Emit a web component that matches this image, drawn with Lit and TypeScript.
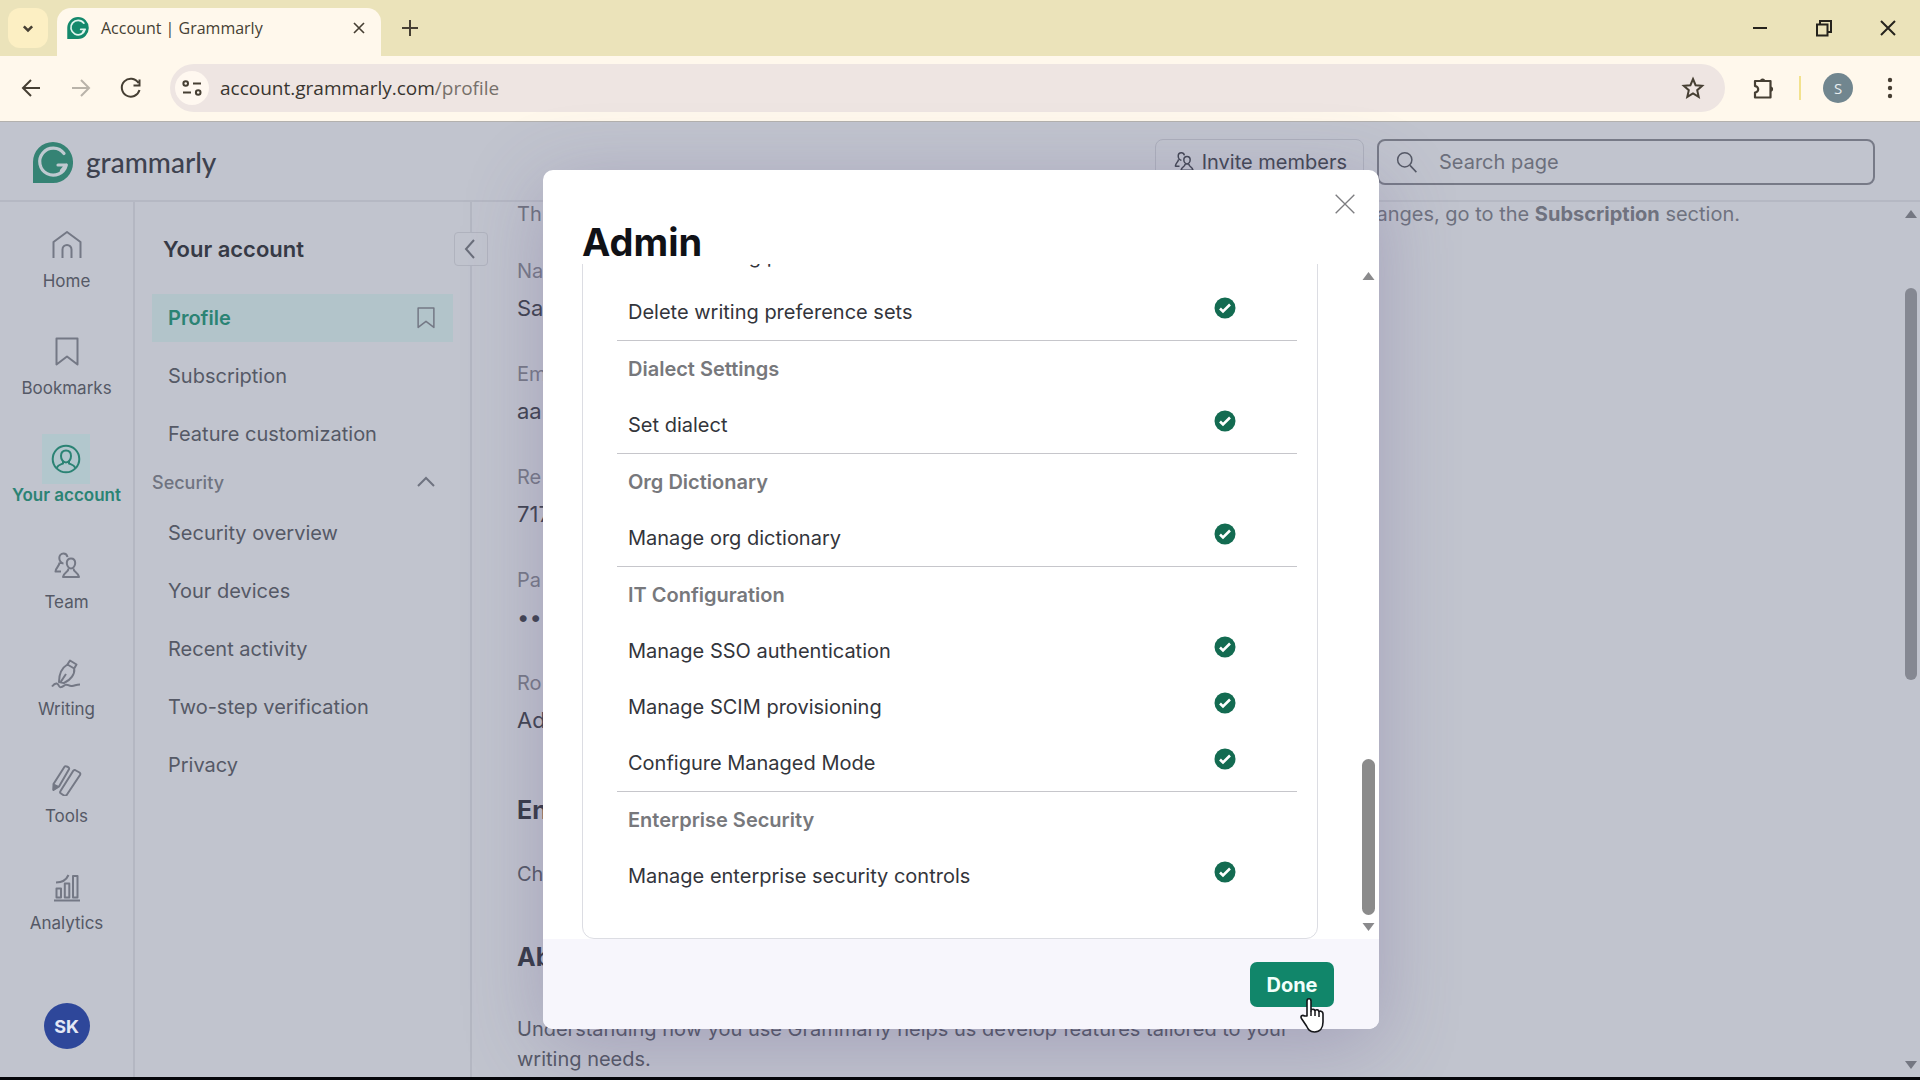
import { LitElement, html, css, svg, nothing } from "lit";
import { customElement, state } from "lit/decorators.js";
import { classMap } from "lit/directives/class-map.js";

const leaf = (cls: string, fill: string, line: string) => html`
  <svg class=${cls} viewBox="0 0 40 41" aria-hidden="true">
    <path d="M20 0A20 20 0 0 1 40 20.500A20 20 0 0 1 20 41H0V20A20 20 0 0 1 20 0Z" fill=${fill} />
    <path d="M31 11.500A13.500 13.500 0 1 0 33.300 23H25M33.300 23L28.500 28.500" fill="none" stroke=${line} stroke-width="3.200" stroke-linecap="round" stroke-linejoin="round" />
  </svg>`;

const shapes = {
  home: svg`<path d="M2.500 29V13L16 3l13.500 10v16M11.500 29V20.500a4.500 4.500 0 0 1 9 0V29"/>`,
  bookmark: svg`<path d="M5.500 2.500h21v26L16 20.500 5.500 28.500z"/>`,
  account: svg`<circle cx="16" cy="16" r="13.300"/><path d="M16 7.500c-3.300 0-5 2.300-5 5.500s2 6.500 5 6.500 5-3.300 5-6.500-1.700-5.500-5-5.500zM6.500 25c1.500-3 4-3.500 6.500-4.500v-2M25.500 25c-1.500-3-4-3.500-6.500-4.500v-2"/>`,
  team: svg`<path d="M12.500 3.500c-2.600 0-4.200 2-4.200 4.500s1.700 5.500 4.200 5.500M12.500 3.500c2.300 0 3.600 1.600 4 3.600M8.500 12.500C8.500 16 5 17 4.500 21.500h5.500"/><path d="M20 8.500c-2.700 0-4.200 2-4.200 4.600s1.800 5.400 4.200 5.400 4.200-2.800 4.200-5.400-1.500-4.600-4.200-4.600zM17.500 18.500c0 4-4.500 3.500-5.500 8.500h16c-1-5-5.500-4.500-5.500-8.500"/>`,
  writing: svg`<path d="M20 3.500l6.500 4-2.300 4-6.800-4zM17.400 7.500l6.800 4c.8 5.500-3.200 11.500-10.200 14.500l-5-1c0-8 2.500-14 8.400-17.500zM11 24.500l5-7.500M2 29.500c4-5 6-3 7-.500s3.500.500 6-1 3.500 1.500 7 1 4-1.500 8-1.500"/>`,
  tools: svg`<path d="M2.500 20L13.500 2.800c1-1.500 5.500.500 4.500 2.500L8 22.500 2.500 26zM3 21l4.500 2M9.500 27L21.500 8c1-1.500 1-2.500 2.500-2l4.500 2.500c1 .7 1.200 1.200.5 2.500L16 30.500c-.8 1.500-2 1.500-3 1l-3-2c-1-.700-1.200-1.500-.500-2.500z"/><path d="M3 21l3.500 2-4 2.500z" fill="currentColor"/>`,
  analytics: svg`<path d="M3 29.500h26M5.500 17.500h4.500v9H5.500zM13.800 12.500h4.500v14h-4.500zM22 5h4.500v21.500H22zM5 11.500c6 0 10.500-3 12.500-7.500"/>`,
  search: svg`<circle cx="13" cy="13" r="9.500"/><path d="M20 20.500l8.500 9"/>`,
};

type Shape = keyof typeof shapes;

const icon = (name: Shape, cls = "icon") => html`
  <svg class=${cls} viewBox="0 0 32 32" fill="none" stroke="currentColor" stroke-width="2" stroke-linejoin="round" aria-hidden="true">${shapes[name]}</svg>`;

const line = (d: string, cls = "glyph", width = 2) => html`
  <svg class=${cls} viewBox="0 0 24 24" fill="none" stroke="currentColor" stroke-width=${width} aria-hidden="true"><path d=${d} /></svg>`;

@customElement("browser-chrome")
class BrowserChrome extends LitElement {
  static styles = css`
    :host { display: block; font-family: "Open Sans", "Noto Sans", sans-serif; color: #463f33; }
    button { border: 0; padding: 0; margin: 0; background: none; color: inherit; font: inherit; display: grid; place-items: center; }
    .strip { height: 56px; box-sizing: border-box; padding: 8px 0 0 8px; background: #ebe3ba; display: flex; align-items: flex-start; }
    .tabs { width: 40px; height: 40px; border-radius: 12px; background: #fcefc3; margin-right: 9px; }
    .tab { width: 324px; height: 48px; box-sizing: border-box; padding: 0 12px 8px 10px; border-radius: 14px 14px 0 0; background: #fff8ec; display: flex; align-items: center; gap: 12px; font-size: 16px; }
    .tab .title { flex: 1; white-space: nowrap; }
    .favicon { width: 22px; height: 22px; }
    .mini { width: 20px; height: 20px; }
    .glyph { width: 24px; height: 24px; }
    .new { width: 40px; height: 40px; margin-left: 9px; }
    .window { margin-left: auto; display: flex; color: #25231d; }
    .window button { width: 64px; height: 40px; }
    .bar { height: 66px; box-sizing: border-box; padding: 8px 18px 9px 12px; background: #fff8ec; border-bottom: 1px solid #b3b1ae; display: flex; align-items: center; }
    .nav { display: flex; gap: 12px; margin-right: 20px; }
    .nav button { width: 38px; height: 40px; }
    .off { color: #b9b3a9; }
    .address { flex: 1; height: 48px; box-sizing: border-box; padding: 0 20px 0 5px; border-radius: 24px; background: #eee5e2; display: flex; align-items: center; gap: 11px; }
    .site { width: 34px; height: 34px; border-radius: 17px; background: #fff8f0; }
    .address a { flex: 1; color: #39352f; text-decoration: none; font-size: 19px; }
    .address a span { color: #77706a; }
    .tools { display: flex; align-items: center; margin-left: 26px; }
    .rule { width: 2px; height: 24px; background: #f3e28d; margin: 0 22px 0 24px; }
    .me { width: 30px; height: 30px; border-radius: 15px; background: #71868f; color: #e9eef0; font-size: 15px; margin-right: 25px; }
  `;

  render() {
    return html`
      <div class="strip">
        <button class="tabs" aria-label="Search tabs">${line("M7 10l5 5 5-5", "mini", 3)}</button>
        <div class="tab">
          ${leaf("favicon", "#14896c", "#dff5ee")}
          <span class="title">Account | Grammarly</span>
          <button aria-label="Close tab">${line("M6 6l12 12M18 6L6 18", "mini")}</button>
        </div>
        <button class="new" aria-label="New tab">${line("M12 4v16M4 12h16")}</button>
        <div class="window">
          <button aria-label="Minimize">${line("M5 12h14")}</button>
          <button aria-label="Restore">${line("M5 8.500h10.500v11H5zM8 8V5h11v11h-3")}</button>
          <button aria-label="Close">${line("M5 5l14 14M19 5L5 19")}</button>
        </div>
      </div>
      <div class="bar">
        <div class="nav">
          <button aria-label="Back">${line("M21 12H4M12 4l-8 8 8 8")}</button>
          <button class="off" aria-label="Forward">${line("M3 12h17M12 4l8 8-8 8")}</button>
          <button aria-label="Reload">${line("M19.500 7A9 9 0 1 0 20.500 14M20.500 3.500V9.500H14.500")}</button>
        </div>
        <div class="address">
          <button class="site" aria-label="Site information">${line("M13 7.500h8M3 16.500h8M8 7.500a2.300 2.300 0 1 0-4.600 0a2.300 2.300 0 1 0 4.600 0M20.500 16.500a2.300 2.300 0 1 0-4.600 0a2.300 2.300 0 1 0 4.600 0")}</button>
          <a href="#profile">account.grammarly.com<span>/profile</span></a>
          <button aria-label="Bookmark this tab">${line("M12 3l2.600 6.200 6.600.600-5 4.400 1.500 6.600L12 17.300l-5.700 3.500 1.500-6.600-5-4.400 6.600-.600z")}</button>
        </div>
        <div class="tools">
          <button aria-label="Extensions">
            <svg class="glyph" viewBox="0 0 24 24" fill="none" stroke="currentColor" stroke-width="2.200" stroke-linejoin="round"><path d="M4 5H19.500V21.500H4V16.500a3.200 3.200 0 0 0 0-6.400z" /><path d="M9 5a2.600 2.600 0 0 1 5.200 0zM19.500 10.500a2.600 2.600 0 0 1 0 5.200z" fill="currentColor" stroke="none" /></svg>
          </button>
          <span class="rule"></span>
          <button class="me" aria-label="Profile S">S</button>
          <button aria-label="Menu">
            <svg class="glyph" viewBox="0 0 24 24" fill="currentColor"><circle cx="12" cy="4" r="2.200"/><circle cx="12" cy="12" r="2.200"/><circle cx="12" cy="20" r="2.200"/></svg>
          </button>
        </div>
      </div>`;
  }
}

const rail: { label: string; shape: Shape }[] = [
  { label: "Home", shape: "home" },
  { label: "Bookmarks", shape: "bookmark" },
  { label: "Your account", shape: "account" },
  { label: "Team", shape: "team" },
  { label: "Writing", shape: "writing" },
  { label: "Tools", shape: "tools" },
  { label: "Analytics", shape: "analytics" },
];

const fields = [
  ["Na", "Sa"],
  ["Em", "aa"],
  ["Re", "717"],
  ["Pa", "••"],
  ["Ro", "Ad"],
];

@customElement("account-page")
class AccountPage extends LitElement {
  static styles = css`
    :host { display: flex; flex-direction: column; min-height: 0; background: #c1c4ce; color: #555966; font-family: Inter, "Liberation Sans", sans-serif; font-size: 20px; }
    button { padding: 0; margin: 0; background: none; color: inherit; font: inherit; }
    a { color: inherit; text-decoration: none; }
    h2, h3, p, dl, dd { margin: 0; }
    .icon { width: 32px; height: 32px; }
    .small { width: 24px; height: 24px; }
    header { height: 80px; flex: none; box-sizing: border-box; padding: 2px 45px 0 33px; border-bottom: 2px solid #b5b8c3; display: flex; align-items: center; gap: 13px; }
    .brand { display: flex; align-items: center; gap: 13px; margin-right: auto; color: #3e424f; font-family: Lato, sans-serif; font-size: 28px; font-weight: 500; }
    .logo { width: 40px; height: 41px; }
    .invite { height: 46px; padding: 0 16px; border: 1px solid #adb0bc; border-radius: 8px; display: flex; align-items: center; gap: 6px; color: #434754; }
    .search { width: 498px; height: 46px; box-sizing: border-box; padding: 0 16px; border: 2px solid #777a87; border-radius: 8px; display: flex; align-items: center; gap: 20px; }
    .search input { flex: 1; min-width: 0; border: 0; padding: 0; outline: 0; background: none; font: inherit; color: inherit; }
    .search input::placeholder { color: #6c6f7c; opacity: 1; }
    .body { flex: 1; min-height: 0; display: flex; }
    .rail { width: 135px; box-sizing: border-box; padding: 18px 0 28px; border-right: 2px solid #b4b7c2; display: flex; flex-direction: column; align-items: center; font-size: 16px; font-weight: 500; }
    .rail a { height: 107px; display: flex; flex-direction: column; align-items: center; line-height: 22px; white-space: nowrap; font-size: 17px; font-weight: 400; }
    .tile { width: 48px; height: 50px; display: grid; place-items: center; color: #747885; }
    .rail a.on { color: #2b8374; font-weight: 600; }
    .on .tile { background: #b2c7cd; color: #2b8374; }
    .avatar { margin-top: auto; width: 46px; height: 46px; border: 0; border-radius: 23px; background: #2e479a; color: #e3e7f5; font-size: 18px; font-weight: 700; }
    .panel { width: 337px; box-sizing: border-box; padding: 30px 17px 0; border-right: 2px solid #b4b7c2; }
    .head { display: flex; align-items: center; justify-content: space-between; height: 34px; padding-left: 11px; margin: 0 -35px 28px 0; color: #363a46; }
    .head h2 { font-size: 22px; font-weight: 600; }
    .fold { width: 34px; height: 34px; border: 1px solid #b0b3be; border-radius: 4px; background: #c1c4ce; color: #6a6e7a; display: grid; place-items: center; }
    .list { display: flex; flex-direction: column; gap: 10px; }
    .list a { height: 48px; padding: 0 15px 0 16px; display: flex; align-items: center; justify-content: space-between; }
    .list a.on { background: #b2c4ca; color: #2b8374; font-weight: 600; }
    .list a.on svg { color: #747885; }
    .group { width: 100%; height: 24px; margin: 12px 0 15px; padding-right: 15px; border: 0; display: flex; align-items: center; justify-content: space-between; font-size: 18px; font-weight: 500; color: #6f7380; }
    .main { flex: 1; min-width: 0; overflow: hidden; padding: 0 162px 0 45px; line-height: 30px; }
    .note { display: flex; justify-content: space-between; color: #6f727f; line-height: 24px; margin-bottom: 27px; }
    .field { height: 103px; }
    .field dt { height: 36px; line-height: 36px; color: #777a87; }
    .field dd { line-height: 38px; font-size: 22px; color: #3f434f; }
    .main h3 { font-size: 25px; font-weight: 700; color: #363a46; line-height: 36px; }
    .first { margin: 24px 0 31px; }
    .next { margin: 50px 0 39px; }
    .wide { width: 780px; }
    .track { width: 18px; flex: none; padding: 8px 0; box-sizing: border-box; display: flex; flex-direction: column; align-items: center; color: #747782; }
    .track svg { width: 12px; height: 8px; }
    .thumb { width: 12px; height: 392px; border-radius: 6px; background: #858892; margin: 70px 0 auto; }
  `;

  render() {
    return html`
      <header>
        <a class="brand" href="#home">${leaf("logo", "#358374", "#bfc9d0")}<span>grammarly</span></a>
        <button class="invite">${icon("team", "small")}Invite members</button>
        <label class="search">${icon("search", "small")}<input type="search" aria-label="Search page" placeholder="Search page" /></label>
      </header>
      <div class="body">
        <nav class="rail">
          ${rail.map(
            (item) => html`<a href="#${item.shape}" class=${classMap({ on: item.shape === "account" })}><span class="tile">${icon(item.shape)}</span>${item.label}</a>`,
          )}
          <button class="avatar">SK</button>
        </nav>
        <nav class="panel">
          <div class="head">
            <h2>Your account</h2>
            <button class="fold" aria-label="Collapse panel">${line("M15 3l-8 9 8 9", "small")}</button>
          </div>
          <div class="list">
            <a class="on" href="#profile">Profile ${icon("bookmark", "small")}</a>
            <a href="#subscription">Subscription</a>
            <a href="#features">Feature customization</a>
          </div>
          <button class="group">Security ${line("M4 16l8-8 8 8", "small")}</button>
          <div class="list">
            ${["Security overview", "Your devices", "Recent activity", "Two-step verification", "Privacy"].map(
              (label) => html`<a href="#security">${label}</a>`,
            )}
          </div>
        </nav>
        <main class="main">
          <p class="note"><span>Th</span><span>anges, go to the <b>Subscription</b> section.</span></p>
          <dl>
            ${fields.map(([label, value]) => html`<div class="field"><dt>${label}</dt><dd>${value}</dd></div>`)}
          </dl>
          <h3 class="first">En</h3>
          <p>Ch</p>
          <h3 class="next">Ab</h3>
          <p class="wide">Understanding how you use Grammarly helps us develop features tailored to your writing needs.</p>
        </main>
        <div class="track">
          <svg viewBox="0 0 12 8"><path d="M6 0l6 8H0z" fill="currentColor" /></svg>
          <div class="thumb"></div>
          <svg viewBox="0 0 12 8"><path d="M6 8L0 0h12z" fill="currentColor" /></svg>
        </div>
      </div>`;
  }
}

const sections = [
  { title: "", rows: ["Create writing preference sets", "Delete writing preference sets"] },
  { title: "Dialect Settings", rows: ["Set dialect"] },
  { title: "Org Dictionary", rows: ["Manage org dictionary"] },
  { title: "IT Configuration", rows: ["Manage SSO authentication", "Manage SCIM provisioning", "Configure Managed Mode"] },
  { title: "Enterprise Security", rows: ["Manage enterprise security controls"] },
];

@customElement("role-dialog")
class RoleDialog extends LitElement {
  static styles = css`
    :host { display: flex; flex-direction: column; box-sizing: border-box; border-radius: 10px; background: #fff; box-shadow: 0 16px 80px rgba(96, 80, 140, 0.3); font-family: Inter, "Liberation Sans", sans-serif; font-size: 20px; color: #33353b; overflow: hidden; }
    button { border: 0; padding: 0; margin: 0; background: none; color: inherit; font: inherit; }
    .top { height: 94px; flex: none; box-sizing: border-box; padding: 18px 18px 0 39px; display: flex; justify-content: space-between; align-items: flex-start; }
    h1 { margin: 29px 0 0; font-size: 38px; line-height: 50px; font-weight: 700; color: #101116; }
    .close { width: 32px; height: 32px; color: #7d7d80; }
    .close svg { width: 32px; height: 32px; display: block; }
    .scroll { flex: 1; min-height: 0; display: flex; }
    .view { flex: 1; min-width: 0; margin-left: 39px; overflow: hidden; display: flex; flex-direction: column; justify-content: flex-end; }
    .card { border: 1px solid #dcdde3; border-radius: 12px; padding: 0 20px 34px 34px; }
    table { width: 100%; border-collapse: separate; border-spacing: 0; table-layout: fixed; }
    th, td { height: 56px; padding: 0 11px; box-sizing: border-box; text-align: left; vertical-align: middle; font-weight: 400; line-height: 28px; }
    .section > * { height: 57px; border-top: 1px solid #c6c6cb; }
    .title { font-weight: 600; color: #77787c; }
    .mark { width: 145px; padding: 0 0 12px; text-align: center; }
    .mark svg { width: 22px; height: 22px; vertical-align: middle; }
    .track { width: 22px; flex: none; margin-left: 39px; padding: 8px 0; box-sizing: border-box; display: flex; flex-direction: column; align-items: center; color: #8a8a8c; }
    .track svg { width: 13px; height: 8px; }
    .thumb { width: 13px; height: 156px; border-radius: 7px; background: #8b8b8b; margin: auto 0 8px; }
    footer { height: 90px; flex: none; box-sizing: border-box; padding: 23px 45px; background: #f7f6fc; display: flex; justify-content: flex-end; align-items: flex-start; }
    .done { width: 84px; height: 45px; border-radius: 7px; background: #11866a; color: #f2fffb; font-weight: 700; }
  `;

  render() {
    return html`
      <div class="top">
        <h1>Admin</h1>
        <button class="close" aria-label="Close">${line("M5 5l14 14M19 5L5 19", "x", 1)}</button>
      </div>
      <div class="scroll">
        <div class="view">
          <div class="card">
            <table>
              ${sections.map(
                (section) => html`<tbody>
                  ${section.title ? html`<tr class="section"><th class="title" scope="rowgroup">${section.title}</th><td class="mark"></td></tr>` : nothing}
                  ${section.rows.map(
                    (row) => html`<tr>
                      <th scope="row">${row}</th>
                      <td class="mark">
                        <svg viewBox="0 0 22 22" role="img" aria-label="Allowed"><circle cx="11" cy="11" r="10.500" fill="#136b51" /><path d="M6 11.500l3 3 7-7" fill="none" stroke="#fff" stroke-width="2.600" /></svg>
                      </td>
                    </tr>`,
                  )}
                </tbody>`,
              )}
            </table>
          </div>
        </div>
        <div class="track">
          <svg viewBox="0 0 12 8"><path d="M6 0l6 8H0z" fill="currentColor" /></svg>
          <div class="thumb"></div>
          <svg viewBox="0 0 12 8"><path d="M6 8L0 0h12z" fill="currentColor" /></svg>
        </div>
      </div>
      <footer><button class="done" @click=${() => this.dispatchEvent(new Event("done"))}>Done</button></footer>`;
  }
}

@customElement("app-root")
class AppRoot extends LitElement {
  static styles = css`
    :host { display: flex; flex-direction: column; position: relative; height: 100vh; box-sizing: border-box; border-bottom: 3px solid #05060a; overflow: hidden; }
    account-page { flex: 1; }
    browser-chrome { position: relative; }
    .layer { position: absolute; inset: 170px 0 48px 2px; display: flex; justify-content: center; }
    role-dialog { width: 836px; }
    .pointer { position: absolute; left: 1299px; top: 997px; width: 28px; height: 36px; }
  `;

  @state() private open = true;

  render() {
    return html`
      <browser-chrome></browser-chrome>
      <account-page></account-page>
      ${this.open
        ? html`<div class="layer"><role-dialog role="dialog" aria-label="Admin" @done=${() => (this.open = false)}></role-dialog></div>`
        : nothing}
      <svg class="pointer" viewBox="0 0 28 36" aria-hidden="true">
        <path d="M8 19V4c0-3 4-3 4 0v10c0-2.500 4-2.500 4 .5 0-2.500 4-2.500 4 1 0-2 4-2 4 1.500v8c0 6-3 10-8.500 10-5 0-6.500-3-8-6l-5-7.500c-1.500-2.500 1-4 3-2.500z" fill="#fff" stroke="#15161a" stroke-width="1.600" stroke-linejoin="round" />
        <path d="M12 14v5M16 15v4M20 16v4" stroke="#15161a" stroke-width="1.500" />
      </svg>`;
  }
}
